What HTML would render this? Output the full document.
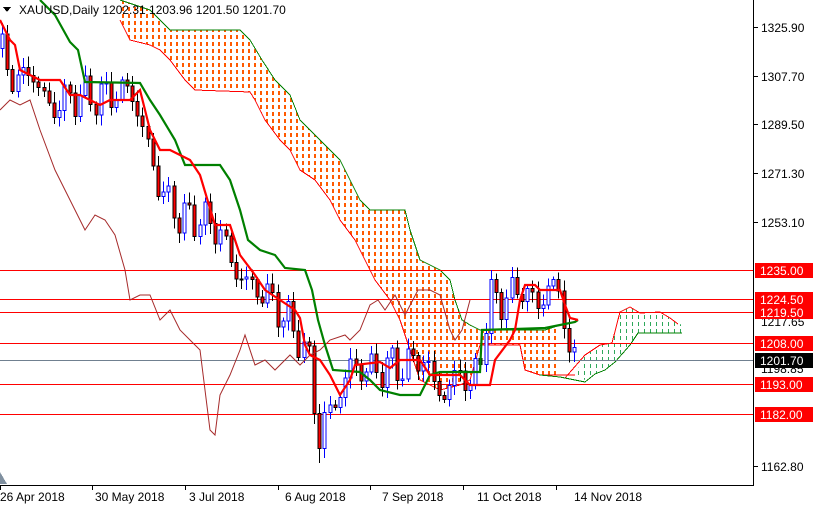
<!DOCTYPE html><html><head><style>
body{margin:0;background:#fff;width:813px;height:509px;overflow:hidden;font-family:"Liberation Sans",sans-serif}
svg text{font-family:"Liberation Sans",sans-serif;font-size:12px}
</style></head><body>
<svg id="s" width="813" height="509" viewBox="0 0 813 509" xmlns="http://www.w3.org/2000/svg" shape-rendering="crispEdges">
<defs>
<pattern id="ho" width="6" height="7" patternUnits="userSpaceOnUse"><rect x="2" y="0" width="2" height="4" fill="#ff5a00"/></pattern>
<pattern id="hg" width="6" height="7" patternUnits="userSpaceOnUse"><rect x="2" y="0" width="1" height="4" fill="#2ea85a"/></pattern>
</defs>
<rect width="813" height="509" fill="#fff"/>
<polygon fill="url(#ho)" points="120,0 150,10 170,30 240,30 250,40 262,60 275,80 290,95 300,120 320,140 340,160 350,180 360,200 370,210 405,210 410,230 420,260 440,270 450,280 455,300 462,320 470,325 480,330 545,330 560,325 560,375 540,375 525,370 520,345 480,345 470,380 460,385 440,390 420,380 410,350 400,320 390,300 375,280 365,260 355,240 340,220 330,200 315,180 300,170 290,150 280,140 265,120 255,100 250,92 195,90 185,80 170,60 160,50 150,45 130,40 120,20"/>
<polyline fill="none" stroke="#008000" points="120,0 150,10 170,30 240,30 250,40 262,60 275,80 290,95 300,120 320,140 340,160 350,180 360,200 370,210 405,210 410,230 420,260 440,270 450,280 455,300 462,320 470,325 480,330 545,330 560,325"/>
<polyline fill="none" stroke="#ff0000" points="120,20 130,40 150,45 160,50 170,60 185,80 195,90 250,92 255,100 265,120 280,140 290,150 300,170 315,180 330,200 340,220 355,240 365,260 375,280 390,300 400,320 410,350 420,380 440,390 460,385 470,380 480,345 520,345 525,370 540,375 575,375"/>
<polygon fill="url(#hg)" points="575,375 585,355 600,345 612,343 620,312 630,307 640,313 660,312 670,318 682,325 682,333 655,333 638,333 630,345 615,362 605,370 595,374 585,380"/>
<polyline fill="none" stroke="#ff0000" points="565,378 585,355 600,345 612,343 620,312 630,307 640,313 660,312 670,318 678,324"/>
<polyline fill="none" stroke="#008000" points="540,375 560,377 575,380 585,382 595,374 605,370 615,362 630,345 638,333 682,333"/>
<g stroke="#ff0000" stroke-width="1">
<line x1="0" y1="270.5" x2="753" y2="270.5"/><line x1="0" y1="299.5" x2="753" y2="299.5"/><line x1="0" y1="312.5" x2="753" y2="312.5"/><line x1="0" y1="343.5" x2="753" y2="343.5"/><line x1="0" y1="384.5" x2="753" y2="384.5"/><line x1="0" y1="414.5" x2="753" y2="414.5"/></g>
<line x1="0" y1="360.5" x2="753" y2="360.5" stroke="#708090"/>
<g id="candles"></g>
<polyline fill="none" stroke="#a52a2a" stroke-width="1" shape-rendering="auto" points="0,110 10,100 20,105 30,100 40,130 55,170 70,200 85,230 95,215 105,220 115,235 125,270 130,300 140,295 150,295 160,320 170,310 180,330 190,340 200,350 210,430 215,435 220,395 230,375 240,350 245,335 255,365 265,360 275,370 290,355 300,365 310,355 320,350 330,340 345,335 350,340 360,330 370,305 378,300 385,310 395,295 405,315 418,290 430,290 440,295 450,330 455,340 462,330 470,300"/>
<polyline fill="none" stroke="#008000" stroke-width="2.2" shape-rendering="auto" points="40,0 55,15 70,42 78,50 85,82 140,83 150,100 160,115 175,140 185,165 220,165 230,180 240,210 248,240 260,250 275,255 285,268 305,270 312,290 318,320 325,345 333,370 360,372 370,380 380,390 400,395 420,395 430,375 440,372 480,372 482,330 545,328 560,325 575,322 578,320"/>
<polyline fill="none" stroke="#ff0000" stroke-width="2.2" shape-rendering="auto" points="0,20 10,40 15,45 20,70 40,80 60,80 70,95 80,95 90,100 100,105 110,100 130,100 140,90 145,110 150,130 160,150 170,150 180,155 190,160 200,175 215,225 230,225 240,255 255,275 265,290 280,300 295,310 300,318 305,345 310,355 320,360 330,375 340,395 350,380 355,365 380,362 390,368 400,360 420,360 430,375 460,375 470,385 490,385 495,360 510,340 515,330 520,300 525,285 535,285 540,290 560,290 565,305 570,318 578,320"/>
<line x1="753.5" y1="0" x2="753.5" y2="485" stroke="#000"/>
<line x1="0" y1="485.5" x2="754" y2="485.5" stroke="#000"/>
<polygon points="0,472 0,484 7,484" fill="#8090a0"/>
<g stroke="#000"><line x1="754" y1="27.5" x2="758" y2="27.5"/><line x1="754" y1="76.5" x2="758" y2="76.5"/><line x1="754" y1="124.5" x2="758" y2="124.5"/><line x1="754" y1="173.5" x2="758" y2="173.5"/><line x1="754" y1="222.5" x2="758" y2="222.5"/><line x1="754" y1="466.5" x2="758" y2="466.5"/>
<line x1="0.5" y1="485" x2="0.5" y2="490"/><line x1="92.5" y1="485" x2="92.5" y2="490"/><line x1="185.5" y1="485" x2="185.5" y2="490"/><line x1="278.5" y1="485" x2="278.5" y2="490"/><line x1="370.5" y1="485" x2="370.5" y2="490"/><line x1="463.5" y1="485" x2="463.5" y2="490"/><line x1="556.5" y1="485" x2="556.5" y2="490"/></g>
<g fill="#000">
<text x="761" y="32">1325.90</text><text x="761" y="81">1307.70</text><text x="761" y="129">1289.50</text><text x="761" y="178">1271.30</text><text x="761" y="227">1253.10</text><text x="761" y="326">1217.65</text><text x="761" y="373">1198.85</text><text x="761" y="471">1162.80</text>
<text x="0" y="501">26 Apr 2018</text><text x="95" y="501">30 May 2018</text><text x="189" y="501">3 Jul 2018</text><text x="285" y="501">6 Aug 2018</text><text x="382" y="501">7 Sep 2018</text><text x="477" y="501">11 Oct 2018</text><text x="574" y="501">14 Nov 2018</text>
<text x="19" y="14">XAUUSD,Daily  1202.31 1203.96 1201.50 1201.70</text>
</g>
<polygon points="3,7 11,7 7,12" fill="#000"/>
<g fill="#ff0000"><rect x="755" y="263" width="58" height="15"/><rect x="755" y="292" width="58" height="14"/><rect x="755" y="305" width="58" height="14"/><rect x="755" y="336" width="58" height="15"/><rect x="755" y="377" width="58" height="15"/><rect x="755" y="407" width="58" height="15"/></g>
<rect x="755" y="353" width="58" height="15" fill="#000"/>
<g fill="#fff"><text x="760" y="275">1235.00</text><text x="760" y="304">1224.50</text><text x="760" y="317">1219.50</text><text x="760" y="348">1208.00</text><text x="760" y="365">1201.70</text><text x="760" y="389">1193.00</text><text x="760" y="419">1182.00</text></g>
</svg>
<script>
var wp=[[0,1318],[15,1305],[30,1310],[50,1295],[70,1300],[100,1300],[130,1303],[145,1285],[160,1265],[180,1255],[200,1255],[220,1250],[235,1235],[250,1230],[270,1225],[290,1215],[300,1210],[310,1200],[318,1172],[325,1180],[340,1190],[350,1200],[370,1198],[390,1200],[410,1200],[420,1205],[430,1196],[445,1188],[460,1200],[470,1190],[480,1205],[490,1225],[510,1225],[520,1230],[530,1225],[540,1222],[550,1232],[560,1225],[570,1205],[575,1200],[578,1201.7]];
function P(x){for(var i=1;i<wp.length;i++){if(x<=wp[i][0]){var a=wp[i-1],b=wp[i];return a[1]+(b[1]-a[1])*(x-a[0])/(b[0]-a[0]);}}return 1201.7;}
function Y(p){return 27+(1325.9-p)*2.692;}
var g=document.getElementById('candles'),h='',prev=P(0);
for(var x=2;x<=578;x+=5.2){var c=P(x)+5*Math.sin(x*0.9)+3*Math.cos(x*0.37);var o=prev;prev=c;
var hi=Math.max(o,c)+1+3*Math.abs(Math.sin(x*2.3)),lo=Math.min(o,c)-1-3*Math.abs(Math.cos(x*1.9));
if(x>318&&x<324)lo=1164;
var bull=c>=o,col=bull?'#0000ff':'#000';var cx=Math.round(x)+0.5;
h+='<line x1="'+cx+'" y1="'+Y(hi)+'" x2="'+cx+'" y2="'+Y(lo)+'" stroke="'+col+'"/>';
var t=Y(Math.max(o,c)),b=Y(Math.min(o,c));if(b-t<1)b=t+1;
h+='<rect x="'+(cx-1.5)+'" y="'+t+'" width="3" height="'+(b-t)+'" fill="'+(bull?'#fff':'#ff0000')+'" stroke="'+col+'"/>';}
g.innerHTML=h;
</script>
</body></html>
